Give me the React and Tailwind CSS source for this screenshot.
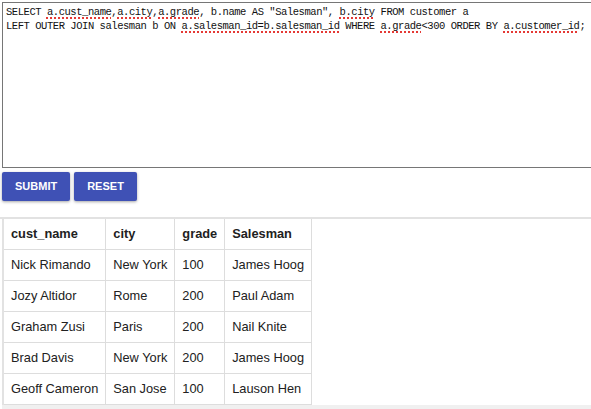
const rows = [
  ["Nick Rimando", "New York", "100", "James Hoog"],
  ["Jozy Altidor", "Rome", "200", "Paul Adam"],
  ["Graham Zusi", "Paris", "200", "Nail Knite"],
  ["Brad Davis", "New York", "200", "James Hoog"],
  ["Geoff Cameron", "San Jose", "100", "Lauson Hen"],
];

const headers = ["cust_name", "city", "grade", "Salesman"];

function Sq({ children }) {
  return (
    <span className="underline decoration-dotted decoration-[#e53935] decoration-[1.5px] underline-offset-[2px]">
      {children}
    </span>
  );
}

export default function App() {
  return (
    <div className="w-[591px] h-[409px] overflow-hidden bg-white font-['Liberation_Sans',Arial,sans-serif] text-[#212121]">
      {/* Query box */}
      <div className="mt-[2px] ml-[2px] w-[600px] h-[166px] border border-[#767676] pt-[2px] pl-[3px] font-['Liberation_Mono',monospace] text-[10.5px] leading-[14px] tracking-[-0.45px] text-[#111] whitespace-pre">
        <div>
          SELECT <Sq>a.cust_name</Sq>,<Sq>a.city</Sq>,<Sq>a.grade</Sq>, b.name AS "Salesman", <Sq>b.city</Sq> FROM customer a
        </div>
        <div>
          LEFT OUTER JOIN salesman b ON <Sq>a.salesman_id=b.salesman_id</Sq> WHERE <Sq>a.grade</Sq>&lt;300 ORDER BY <Sq>a.customer_id</Sq>;
        </div>
      </div>

      {/* Buttons */}
      <div className="flex gap-[4px] mt-[4px] ml-[2px]">
        <button className="h-[29px] px-[13px] bg-[#3f51b5] text-white text-[11px] font-bold rounded-[2px] shadow-[0_1px_3px_rgba(0,0,0,0.35)]">
          SUBMIT
        </button>
        <button className="h-[29px] px-[13px] bg-[#3f51b5] text-white text-[11px] font-bold rounded-[2px] shadow-[0_1px_3px_rgba(0,0,0,0.35)]">
          RESET
        </button>
      </div>

      {/* Result table */}
      <div className="mt-[16px] border-t-2 border-[#e2e2e2]">
        <table className="ml-[2px] text-[12.8px]">
          <thead>
            <tr>
              {headers.map((h, i) => (
                <th
                  key={h}
                  className={`text-left font-bold px-[7px] py-[7px] leading-[16px] border-r border-b border-[#dddddd] ${i === 0 ? "border-l-2 border-l-[#e2e2e2]" : ""}`}
                >
                  {h}
                </th>
              ))}
            </tr>
          </thead>
          <tbody>
            {rows.map((r) => (
              <tr key={r[0]}>
                {r.map((c, i) => (
                  <td
                    key={i}
                    className={`px-[7px] py-[7px] leading-[16px] whitespace-nowrap border-r border-b border-[#dddddd] ${i === 0 ? "border-l-2 border-l-[#e2e2e2]" : ""}`}
                  >
                    {c}
                  </td>
                ))}
              </tr>
            ))}
          </tbody>
        </table>
        <div className="h-[6px] bg-[#f0f0f0] ml-[2px]" />
      </div>
    </div>
  );
}
